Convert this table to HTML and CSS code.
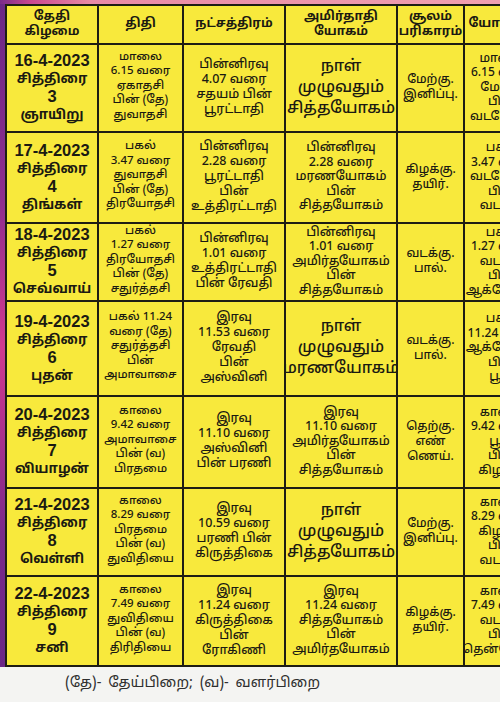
FILE: index.html
```html
<!DOCTYPE html>
<html lang="ta">
<head>
<meta charset="utf-8">
<title>பஞ்சாங்கம்</title>
<link rel="stylesheet" href="styles.css">
</head>
<body>
<div class="frame">
  <div class="grid">
    <div class="cell head">தேதி<br>கிழமை</div>
    <div class="cell head">திதி</div>
    <div class="cell head">நட்சத்திரம்</div>
    <div class="cell head">அமிர்தாதி<br>யோகம்</div>
    <div class="cell head">சூலம்<br>பரிகாரம்</div>
    <div class="cell head">யோகினி</div>

    <div class="cell date"><div><span class="d">16-4-2023</span><br>சித்திரை<br><span class="d">3</span><br>ஞாயிறு</div></div>
    <div class="cell tithi">மாலை<br>6.15 வரை<br>ஏகாதசி<br>பின் (தே)<br>துவாதசி</div>
    <div class="cell star">பின்னிரவு<br>4.07 வரை<br>சதயம் பின்<br>பூரட்டாதி</div>
    <div class="cell yoga big">நாள்<br>முழுவதும்<br>சித்தயோகம்</div>
    <div class="cell sool">மேற்கு.<br>இனிப்பு.</div>
    <div class="cell yogini">மாலை<br>6.15 வரை<br>மேற்கு<br>பின்<br>வடமேற்கு</div>

    <div class="cell date"><div><span class="d">17-4-2023</span><br>சித்திரை<br><span class="d">4</span><br>திங்கள்</div></div>
    <div class="cell tithi">பகல்<br>3.47 வரை<br>துவாதசி<br>பின் (தே)<br>திரயோதசி</div>
    <div class="cell star">பின்னிரவு<br>2.28 வரை<br>பூரட்டாதி<br>பின்<br>உத்திரட்டாதி</div>
    <div class="cell yoga">பின்னிரவு<br>2.28 வரை<br>மரணயோகம்<br>பின்<br>சித்தயோகம்</div>
    <div class="cell sool">கிழக்கு.<br>தயிர்.</div>
    <div class="cell yogini">பகல்<br>3.47 வரை<br>வடமேற்கு<br>பின்<br>வடக்கு</div>

    <div class="cell date"><div><span class="d">18-4-2023</span><br>சித்திரை<br><span class="d">5</span><br>செவ்வாய்</div></div>
    <div class="cell tithi">பகல்<br>1.27 வரை<br>திரயோதசி<br>பின் (தே)<br>சதுர்த்தசி</div>
    <div class="cell star">பின்னிரவு<br>1.01 வரை<br>உத்திரட்டாதி<br>பின் ரேவதி</div>
    <div class="cell yoga">பின்னிரவு<br>1.01 வரை<br>அமிர்தயோகம்<br>பின்<br>சித்தயோகம்</div>
    <div class="cell sool">வடக்கு.<br>பால்.</div>
    <div class="cell yogini">பகல்<br>1.27 வரை<br>வடக்கு<br>பின்<br>ஆக்னேயம்</div>

    <div class="cell date"><div><span class="d">19-4-2023</span><br>சித்திரை<br><span class="d">6</span><br>புதன்</div></div>
    <div class="cell tithi">பகல் 11.24<br>வரை (தே)<br>சதுர்த்தசி<br>பின்<br>அமாவாசை</div>
    <div class="cell star">இரவு<br>11.53 வரை<br>ரேவதி<br>பின்<br>அஸ்வினி</div>
    <div class="cell yoga big">நாள்<br>முழுவதும்<br>மரணயோகம்</div>
    <div class="cell sool">வடக்கு.<br>பால்.</div>
    <div class="cell yogini">பகல்<br>11.24 வரை<br>ஆக்னேயம்<br>பின்<br>பூமி</div>

    <div class="cell date"><div><span class="d">20-4-2023</span><br>சித்திரை<br><span class="d">7</span><br>வியாழன்</div></div>
    <div class="cell tithi">காலை<br>9.42 வரை<br>அமாவாசை<br>பின் (வ)<br>பிரதமை</div>
    <div class="cell star">இரவு<br>11.10 வரை<br>அஸ்வினி<br>பின் பரணி</div>
    <div class="cell yoga">இரவு<br>11.10 வரை<br>அமிர்தயோகம்<br>பின்<br>சித்தயோகம்</div>
    <div class="cell sool">தெற்கு.<br>எண்<br>ணெய்.</div>
    <div class="cell yogini">காலை<br>9.42 வரை<br>பூமி<br>பின்<br>கிழக்கு</div>

    <div class="cell date"><div><span class="d">21-4-2023</span><br>சித்திரை<br><span class="d">8</span><br>வெள்ளி</div></div>
    <div class="cell tithi">காலை<br>8.29 வரை<br>பிரதமை<br>பின் (வ)<br>துவிதியை</div>
    <div class="cell star">இரவு<br>10.59 வரை<br>பரணி பின்<br>கிருத்திகை</div>
    <div class="cell yoga big">நாள்<br>முழுவதும்<br>சித்தயோகம்</div>
    <div class="cell sool">மேற்கு.<br>இனிப்பு.</div>
    <div class="cell yogini">காலை<br>8.29 வரை<br>கிழக்கு<br>பின்<br>வடக்கு</div>

    <div class="cell date"><div><span class="d">22-4-2023</span><br>சித்திரை<br><span class="d">9</span><br>சனி</div></div>
    <div class="cell tithi">காலை<br>7.49 வரை<br>துவிதியை<br>பின் (வ)<br>திரிதியை</div>
    <div class="cell star">இரவு<br>11.24 வரை<br>கிருத்திகை<br>பின்<br>ரோகிணி</div>
    <div class="cell yoga">இரவு<br>11.24 வரை<br>சித்தயோகம்<br>பின்<br>அமிர்தயோகம்</div>
    <div class="cell sool">கிழக்கு.<br>தயிர்.</div>
    <div class="cell yogini">காலை<br>7.49 வரை<br>வடக்கு<br>பின்<br>தென்மேற்கு</div>
  </div>
</div>
<p class="note">(தே)- தேய்பிறை; (வ)- வளர்பிறை</p>
</body>
</html>
```

FILE: styles.css
```css
html, body {
  margin: 0;
  padding: 0;
}
body {
  width: 500px;
  height: 702px;
  overflow: hidden;
  background: #f4f4f2;
  font-family: "Noto Sans Tamil", "Lohit Tamil", "Noto Sans", "Liberation Sans", sans-serif;
  color: #1b1a12;
}
.frame {
  padding: 4px 0 0 5px;
  background:
    linear-gradient(90deg, #7a2c8a 0, #c9478f 30px, #e98aa6 90px, #f0a0b0 100%) top left / 100% 4px no-repeat,
    linear-gradient(180deg, #6a2786 0%, #8f2e8e 30%, #d13a8f 52%, #b5338e 62%, #7a2a8a 80%, #6a2786 100%);
}
.grid {
  display: grid;
  grid-template-columns: 92px 85px 102px 112px 67px 76px;
  grid-template-rows: 39px 88px 91px 78px 95px 92px 88px 90px;
  width: 534px;
  background: #f8e93c;
  border-top: 2px solid #1e1d14;
  border-left: 2px solid #1e1d14;
  box-sizing: border-box;
}
.cell {
  box-sizing: border-box;
  border-right: 2px solid #1e1d14;
  border-bottom: 2px solid #1e1d14;
  display: flex;
  align-items: center;
  justify-content: center;
  text-align: center;
  overflow: hidden;
  white-space: nowrap;
  font-weight: 500;
}
.head {
  font-size: 12.5px;
  font-weight: 700;
  line-height: 15px;
}
.date {
  font-size: 13.5px;
  font-weight: 700;
  line-height: 17px;
}
.date .d {
  font-family: "Liberation Sans", sans-serif;
  font-size: 16.5px;
}
.tithi {
  font-size: 11.5px;
  line-height: 14.5px;
  padding-bottom: 4px;
}
.star {
  font-size: 12.5px;
  line-height: 15px;
}
.yoga {
  font-size: 12.5px;
  line-height: 14.5px;
}
.yoga.big {
  font-size: 16px;
  line-height: 21px;
}
.sool {
  font-size: 12px;
  line-height: 15px;
}
.yogini {
  font-size: 12px;
  line-height: 14.5px;
}
.note {
  margin: 7px 0 0 65px;
  font-size: 14.5px;
  word-spacing: 3px;
  color: #2e2e2e;
}
```
